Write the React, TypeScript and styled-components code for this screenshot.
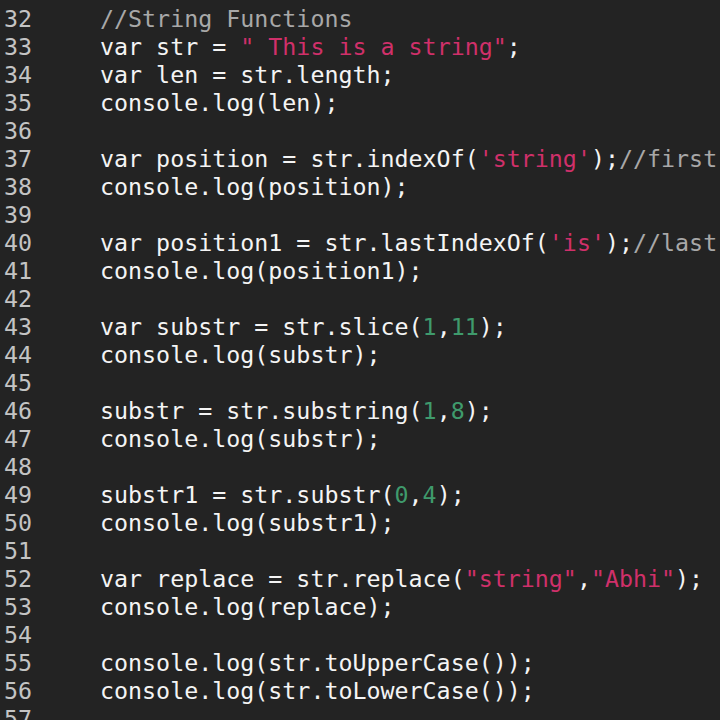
import React from "react";
import styled, { createGlobalStyle } from "styled-components";

const Global = createGlobalStyle`
  html, body { margin: 0; padding: 0; background: #232323; }
  body { width: 720px; height: 720px; overflow: hidden; }
`;

const Editor = styled.div`
  width: 720px;
  height: 720px;
  overflow: hidden;
  background: #232323;
  padding-top: 5px;
  box-sizing: border-box;
  font-family: "DejaVu Sans Mono", "Liberation Mono", monospace;
  font-size: 23.3px;
  line-height: 28px;
`;

const Row = styled.div`
  display: flex;
  height: 28px;
  white-space: pre;
`;

const Num = styled.span`
  width: 96px;
  padding-left: 4px;
  flex: none;
  color: #c4c4c4;
`;

const Code = styled.span`
  color: #f4f4f4;
`;

const Str = styled.span`
  color: #d0306a;
`;
const N = styled.span`
  color: #3f9a6c;
`;
const Cm = styled.span`
  color: #a8a8a8;
`;

type Tok = [string, string];
const lines: Tok[][] = [
  [["c", "//String Functions"]],
  [["t", "var str = "], ["s", "\" This is a string\""], ["t", ";"]],
  [["t", "var len = str.length;"]],
  [["t", "console.log(len);"]],
  [],
  [["t", "var position = str.indexOf("], ["s", "'string'"], ["t", ");"], ["c", "//first occurrence"]],
  [["t", "console.log(position);"]],
  [],
  [["t", "var position1 = str.lastIndexOf("], ["s", "'is'"], ["t", ");"], ["c", "//last occurrence"]],
  [["t", "console.log(position1);"]],
  [],
  [["t", "var substr = str.slice("], ["n", "1"], ["t", ","], ["n", "11"], ["t", ");"]],
  [["t", "console.log(substr);"]],
  [],
  [["t", "substr = str.substring("], ["n", "1"], ["t", ","], ["n", "8"], ["t", ");"]],
  [["t", "console.log(substr);"]],
  [],
  [["t", "substr1 = str.substr("], ["n", "0"], ["t", ","], ["n", "4"], ["t", ");"]],
  [["t", "console.log(substr1);"]],
  [],
  [["t", "var replace = str.replace("], ["s", "\"string\""], ["t", ","], ["s", "\"Abhi\""], ["t", ");"]],
  [["t", "console.log(replace);"]],
  [],
  [["t", "console.log(str.toUpperCase());"]],
  [["t", "console.log(str.toLowerCase());"]],
  [],
];

function renderTok([k, v]: Tok, i: number) {
  if (k === "s") return <Str key={i}>{v}</Str>;
  if (k === "n") return <N key={i}>{v}</N>;
  if (k === "c") return <Cm key={i}>{v}</Cm>;
  return <React.Fragment key={i}>{v}</React.Fragment>;
}

export default function App() {
  return (
    <>
      <Global />
      <Editor>
        {lines.map((toks, i) => (
          <Row key={i}>
            <Num>{32 + i}</Num>
            <Code>{toks.map(renderTok)}</Code>
          </Row>
        ))}
      </Editor>
    </>
  );
}
